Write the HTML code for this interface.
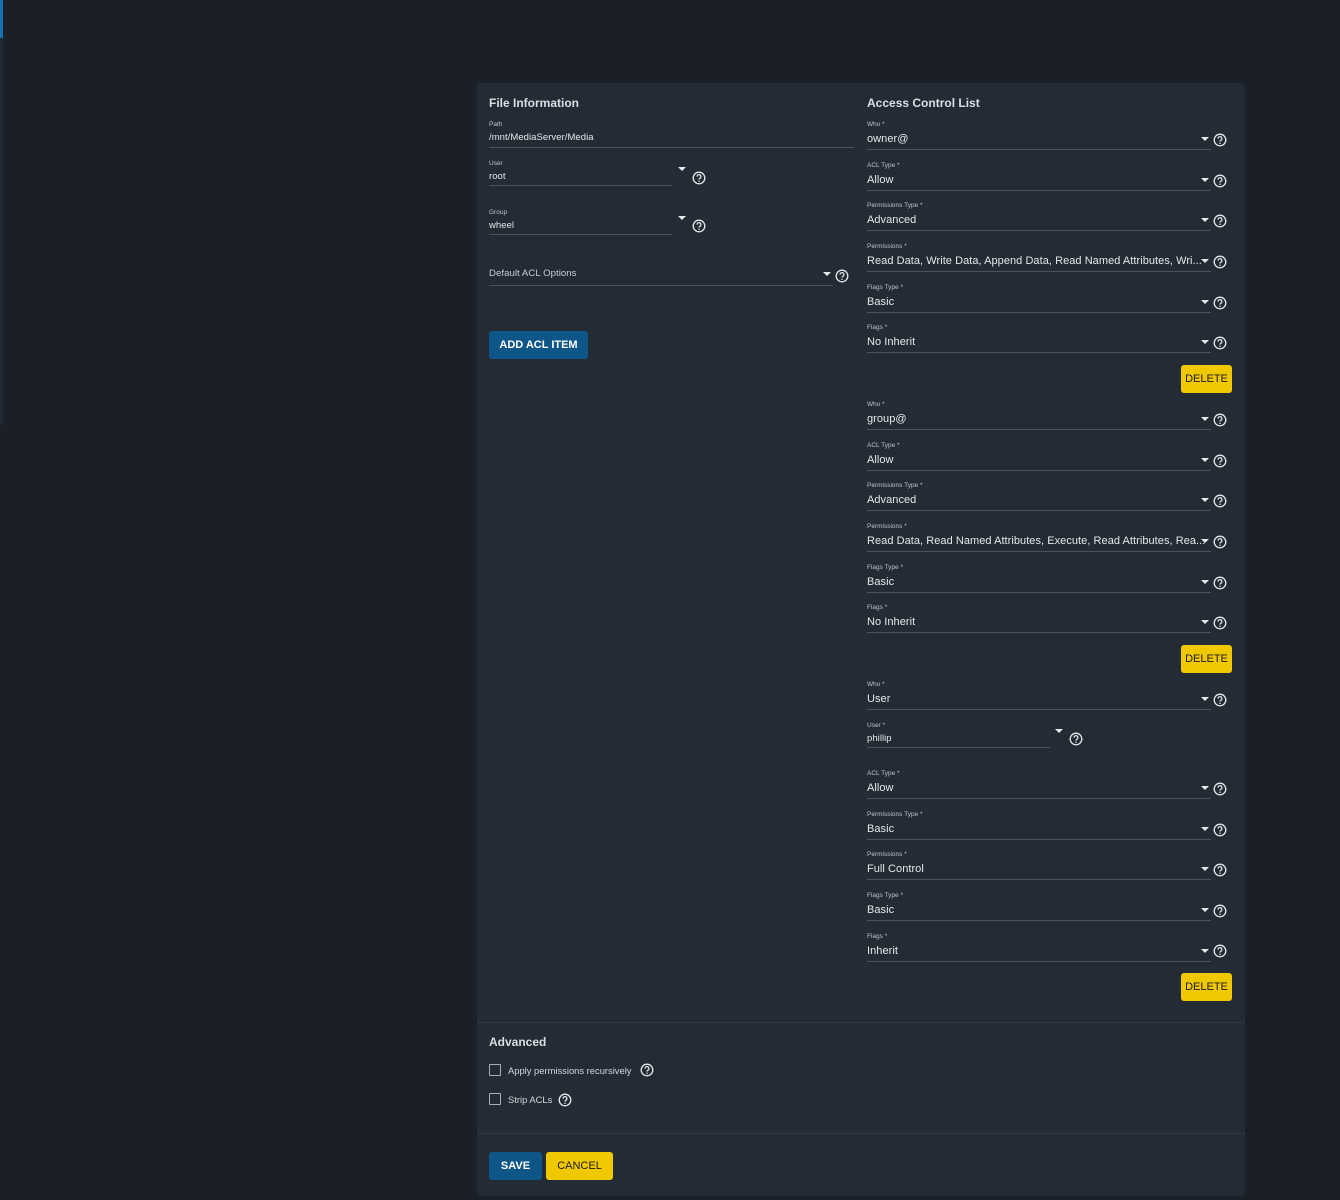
<!DOCTYPE html>
<html><head><meta charset="utf-8"><style>
body{margin:0;width:1340px;height:1200px;background:#1b2028;font-family:"Liberation Sans",sans-serif;position:relative;overflow:hidden}
.side{position:absolute;left:0;top:0;width:3px;height:425px;background:#232a33}
.sideb{position:absolute;left:0;top:0;width:3px;height:38px;background:#1770b0}
.card{position:absolute;left:477px;top:83px;width:768px;height:1113px;background:#232b35;border-radius:3px}
.sep{position:absolute;left:477px;width:768px;height:1px;background:#2f3843}
.ht{position:absolute;color:#dcdfe3;font-size:12px;font-weight:bold}
.f{position:absolute;height:29px;border-bottom:1px solid #4a535d}
.f .l{position:absolute;left:0;top:1px;font-size:6.5px;line-height:8px;color:#bfc4ca}
.f .v{position:absolute;left:0;top:12px;font-size:11px;line-height:14px;color:#e6e8ea;white-space:nowrap;letter-spacing:0.05px}
.a{position:absolute;width:0;height:0;border-left:4px solid transparent;border-right:4px solid transparent;border-top:4px solid #e6e8ea;margin-top:-2px}
.h{position:absolute;width:14px;height:14px}
.btn{position:absolute;border-radius:3px;font-size:11px;font-weight:bold;text-align:center;line-height:28px;height:28px}
.blue{background:#0e5687;color:#fff}
.yel{background:#f0c800;color:#1c1c1c;font-weight:normal;font-size:11px}
.cb{position:absolute;width:10px;height:10px;border:1.5px solid #aab0b6;border-radius:1px}
.ct{position:absolute;font-size:9.4px;color:#d5d8dc}
</style></head><body>
<div class="side"></div><div class="sideb"></div>
<div class="card"></div>
<div class="sep" style="top:1022px"></div>
<div class="sep" style="top:1133px"></div>

<svg width="0" height="0" style="position:absolute"><defs><g id="q"><circle cx="7" cy="7" r="5.8" fill="none" stroke="#e6e8ea" stroke-width="1.3"/><path d="M5.1 5.6a1.9 1.9 0 1 1 2.7 1.7c-.6.3-.8.7-.8 1.3" fill="none" stroke="#e6e8ea" stroke-width="1.2"/><circle cx="7" cy="10.2" r=".75" fill="#e6e8ea"/></g></defs></svg>

<div class="ht" style="left:489px;top:96px">File Information</div>
<div class="ht" style="left:867px;top:96px">Access Control List</div>

<!-- left column -->
<div class="f" style="left:489px;top:120px;width:365px;height:27px"><div class="l">Path</div><div class="v" style="font-size:9.5px;top:11px">/mnt/MediaServer/Media</div></div>
<div class="f" style="left:489px;top:159px;width:183px;height:26px"><div class="l">User</div><div class="v" style="font-size:9.5px;top:11px">root</div></div>
<div class="a" style="left:678px;top:169px"></div><svg class="h" style="left:692px;top:171px"><use href="#q"/></svg>
<div class="f" style="left:489px;top:208px;width:183px;height:26px"><div class="l">Group</div><div class="v" style="font-size:9.5px;top:11px">wheel</div></div>
<div class="a" style="left:678px;top:218px"></div><svg class="h" style="left:692px;top:219px"><use href="#q"/></svg>
<div class="f" style="left:489px;top:258px;width:344px;height:27px"><div class="v" style="font-size:9.6px;top:9px;color:#c9cdd2">Default ACL Options</div></div>
<div class="a" style="left:823px;top:274px"></div><svg class="h" style="left:835px;top:269px"><use href="#q"/></svg>
<div class="btn blue" style="left:489px;top:331px;width:99px">ADD ACL ITEM</div>

<!-- right column block 1 -->
<div class="f" style="left:867px;top:120px;width:344px"><div class="l">Who *</div><div class="v">owner@</div></div>
<div class="a" style="left:1201px;top:139px"></div><svg class="h" style="left:1213px;top:133px"><use href="#q"/></svg>
<div class="f" style="left:867px;top:161px;width:344px"><div class="l">ACL Type *</div><div class="v">Allow</div></div>
<div class="a" style="left:1201px;top:180px"></div><svg class="h" style="left:1213px;top:174px"><use href="#q"/></svg>
<div class="f" style="left:867px;top:201px;width:344px"><div class="l">Permissions Type *</div><div class="v">Advanced</div></div>
<div class="a" style="left:1201px;top:220px"></div><svg class="h" style="left:1213px;top:214px"><use href="#q"/></svg>
<div class="f" style="left:867px;top:242px;width:344px"><div class="l">Permissions *</div><div class="v">Read Data, Write Data, Append Data, Read Named Attributes, Wri...</div></div>
<div class="a" style="left:1201px;top:261px"></div><svg class="h" style="left:1213px;top:255px"><use href="#q"/></svg>
<div class="f" style="left:867px;top:283px;width:344px"><div class="l">Flags Type *</div><div class="v">Basic</div></div>
<div class="a" style="left:1201px;top:302px"></div><svg class="h" style="left:1213px;top:296px"><use href="#q"/></svg>
<div class="f" style="left:867px;top:323px;width:344px"><div class="l">Flags *</div><div class="v">No Inherit</div></div>
<div class="a" style="left:1201px;top:342px"></div><svg class="h" style="left:1213px;top:336px"><use href="#q"/></svg>
<div class="btn yel" style="left:1181px;top:365px;width:51px">DELETE</div>

<!-- block 2 -->
<div class="f" style="left:867px;top:400px;width:344px"><div class="l">Who *</div><div class="v">group@</div></div>
<div class="a" style="left:1201px;top:419px"></div><svg class="h" style="left:1213px;top:413px"><use href="#q"/></svg>
<div class="f" style="left:867px;top:441px;width:344px"><div class="l">ACL Type *</div><div class="v">Allow</div></div>
<div class="a" style="left:1201px;top:460px"></div><svg class="h" style="left:1213px;top:454px"><use href="#q"/></svg>
<div class="f" style="left:867px;top:481px;width:344px"><div class="l">Permissions Type *</div><div class="v">Advanced</div></div>
<div class="a" style="left:1201px;top:500px"></div><svg class="h" style="left:1213px;top:494px"><use href="#q"/></svg>
<div class="f" style="left:867px;top:522px;width:344px"><div class="l">Permissions *</div><div class="v">Read Data, Read Named Attributes, Execute, Read Attributes, Rea...</div></div>
<div class="a" style="left:1201px;top:541px"></div><svg class="h" style="left:1213px;top:535px"><use href="#q"/></svg>
<div class="f" style="left:867px;top:563px;width:344px"><div class="l">Flags Type *</div><div class="v">Basic</div></div>
<div class="a" style="left:1201px;top:582px"></div><svg class="h" style="left:1213px;top:576px"><use href="#q"/></svg>
<div class="f" style="left:867px;top:603px;width:344px"><div class="l">Flags *</div><div class="v">No Inherit</div></div>
<div class="a" style="left:1201px;top:622px"></div><svg class="h" style="left:1213px;top:616px"><use href="#q"/></svg>
<div class="btn yel" style="left:1181px;top:645px;width:51px">DELETE</div>

<!-- block 3 -->
<div class="f" style="left:867px;top:680px;width:344px"><div class="l">Who *</div><div class="v">User</div></div>
<div class="a" style="left:1201px;top:699px"></div><svg class="h" style="left:1213px;top:693px"><use href="#q"/></svg>
<div class="f" style="left:867px;top:721px;width:183px;height:26px"><div class="l">User *</div><div class="v" style="font-size:9.5px;top:11px">phillip</div></div>
<div class="a" style="left:1055px;top:731px"></div><svg class="h" style="left:1069px;top:732px"><use href="#q"/></svg>
<div class="f" style="left:867px;top:769px;width:344px"><div class="l">ACL Type *</div><div class="v">Allow</div></div>
<div class="a" style="left:1201px;top:788px"></div><svg class="h" style="left:1213px;top:782px"><use href="#q"/></svg>
<div class="f" style="left:867px;top:810px;width:344px"><div class="l">Permissions Type *</div><div class="v">Basic</div></div>
<div class="a" style="left:1201px;top:829px"></div><svg class="h" style="left:1213px;top:823px"><use href="#q"/></svg>
<div class="f" style="left:867px;top:850px;width:344px"><div class="l">Permissions *</div><div class="v">Full Control</div></div>
<div class="a" style="left:1201px;top:869px"></div><svg class="h" style="left:1213px;top:863px"><use href="#q"/></svg>
<div class="f" style="left:867px;top:891px;width:344px"><div class="l">Flags Type *</div><div class="v">Basic</div></div>
<div class="a" style="left:1201px;top:910px"></div><svg class="h" style="left:1213px;top:904px"><use href="#q"/></svg>
<div class="f" style="left:867px;top:932px;width:344px"><div class="l">Flags *</div><div class="v">Inherit</div></div>
<div class="a" style="left:1201px;top:951px"></div><svg class="h" style="left:1213px;top:944px"><use href="#q"/></svg>
<div class="btn yel" style="left:1181px;top:973px;width:51px">DELETE</div>

<!-- advanced -->
<div class="ht" style="left:489px;top:1035px">Advanced</div>
<div class="cb" style="left:489px;top:1064px"></div>
<div class="ct" style="left:508px;top:1065px">Apply permissions recursively</div>
<svg class="h" style="left:640px;top:1063px"><use href="#q"/></svg>
<div class="cb" style="left:489px;top:1093px"></div>
<div class="ct" style="left:508px;top:1094px">Strip ACLs</div>
<svg class="h" style="left:558px;top:1093px"><use href="#q"/></svg>

<div class="btn blue" style="left:489px;top:1152px;width:53px">SAVE</div>
<div class="btn yel" style="left:546px;top:1152px;width:67px">CANCEL</div>
</body></html>
